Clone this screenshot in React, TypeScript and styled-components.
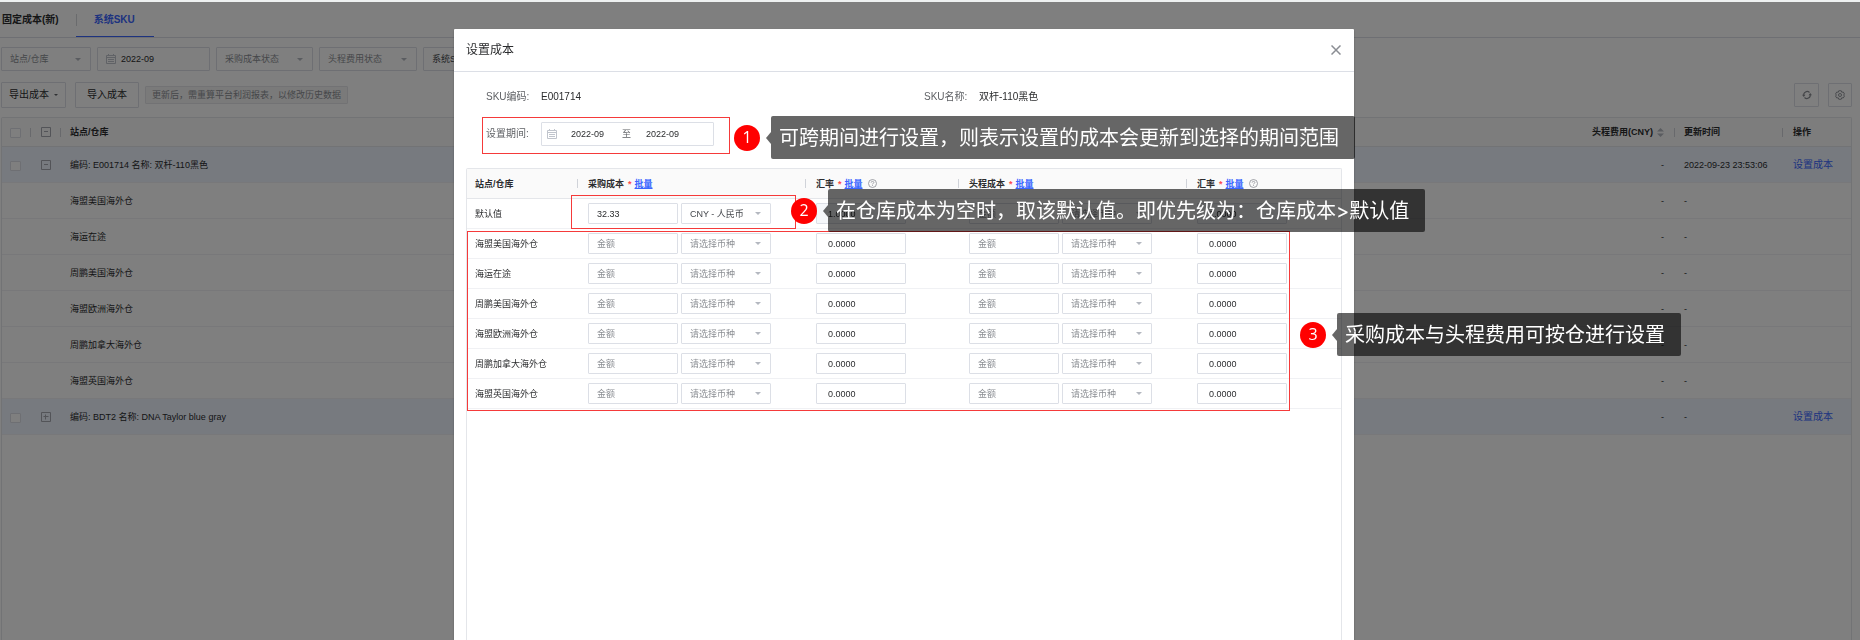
import React from "react";
import styled, { createGlobalStyle, css } from "styled-components";

const blue = "#3b66ff";
const line = "#dcdfe6";
const ink = "#2b2c2e";
const muted = "#8c8f94";

const GlobalStyle = createGlobalStyle`
  *, *::before, *::after { box-sizing: border-box; }
  body {
    margin: 0;
    overflow: hidden;
    background: #fff;
    color: ${ink};
    font: 9px/14px "Liberation Sans", "Noto Sans CJK SC", sans-serif;
  }
  button, input, select { font: inherit; color: inherit; margin: 0; }
  a { color: ${blue}; text-decoration: none; }
`;

/* ---------- Page behind the dialog ---------- */

const Page = styled.main`
  display: flex;
  flex-direction: column;
  min-height: 100vh;
  border-top: 2px solid #eef1f1;
`;

const Tabs = styled.nav`
  display: flex;
  height: 36px;
  border-bottom: 1px solid ${line};
  font-size: 10px;
  font-weight: 700;
`;

const Tab = styled.a<{ $active?: boolean }>`
  position: relative;
  display: flex;
  align-items: center;
  padding: 2px ${(p) => (p.$active ? 19 : 17)}px 0 ${(p) => (p.$active ? 18 : 2)}px;
  color: ${(p) => (p.$active ? blue : ink)};
  border-bottom: 1px solid ${(p) => (p.$active ? blue : "transparent")};
  ${(p) =>
    p.$active &&
    css`
      &::before {
        content: "";
        position: absolute;
        left: 0;
        top: 12px;
        height: 12px;
        border-left: 1px solid #d4d6da;
      }
    `}
`;

const Toolbar = styled.div<{ $top: number; $gap: number }>`
  display: flex;
  align-items: center;
  gap: ${(p) => p.$gap}px;
  padding: ${(p) => p.$top}px 8px 0 1px;
`;

const Field = styled.label<{ $w: number; $h?: number; $disabled?: boolean }>`
  display: flex;
  align-items: center;
  gap: 5px;
  flex: none;
  width: ${(p) => p.$w}px;
  height: ${(p) => p.$h ?? 24}px;
  padding: 0 9px 0 8px;
  border: 1px solid ${line};
  border-radius: 1px;
  background: ${(p) => (p.$disabled ? "#f5f7fa" : "#fff")};
`;

const Select = styled.select<{ $placeholder?: boolean }>`
  flex: 1;
  min-width: 0;
  height: 100%;
  padding: 0;
  border: 0;
  outline: 0;
  appearance: none;
  background: transparent;
  color: ${(p) => (p.$placeholder ? muted : "#44474c")};
`;

const TextInput = styled.input<{ $w?: number }>`
  ${(p) => (p.$w ? `width: ${p.$w}px;` : "flex: 1; min-width: 0;")}
  height: 100%;
  padding: 0;
  border: 0;
  outline: 0;
  background: transparent;
  &::placeholder { color: ${muted}; opacity: 1; }
`;

const RangeStart = styled(TextInput)`
  margin-left: 14px;
`;

const Button = styled.button<{ $w: number }>`
  display: flex;
  align-items: center;
  justify-content: center;
  gap: 5px;
  width: ${(p) => p.$w}px;
  height: 26px;
  padding: 0;
  border: 1px solid ${line};
  border-radius: 1px;
  background: #fff;
  font-size: 10px;
`;

const Hint = styled.span`
  height: 18px;
  margin-left: -3px;
  padding: 1px 6px;
  border: 1px solid #e4e5e8;
  border-radius: 1px;
  background: #f4f4f5;
  color: ${muted};
`;

const IconButtons = styled.div`
  display: flex;
  gap: 9px;
  margin-left: auto;
`;

const IconButton = styled(Button)`
  height: 24px;
  color: #8a8d93;
`;

const GridFrame = styled.section<{ $m: string }>`
  flex: 1;
  margin: ${(p) => p.$m};
  border: 1px solid #e4e6ea;
  border-bottom: 0;
  border-radius: 2px 2px 0 0;
`;

const Grid = styled.table`
  width: 100%;
  table-layout: fixed;
  border-collapse: separate;
  border-spacing: 0;
`;

const Th = styled.th<{ $h: number; $sep?: boolean; $right?: boolean; $pad?: number }>`
  height: ${(p) => p.$h}px;
  padding: 0 10px 0 ${(p) => p.$pad ?? 10}px;
  border-bottom: 1px solid #e4e6ea;
  background: linear-gradient(#d0d3d9, #d0d3d9) 0 50% / ${(p) => (p.$sep ? 1 : 0)}px 9px no-repeat #fafafa;
  text-align: ${(p) => (p.$right ? "right" : "left")};
  font-weight: 700;
  white-space: nowrap;
`;

const SkuRow = styled.tr<{ $group?: boolean }>`
  background: ${(p) => (p.$group ? "#eef4ff" : "#fff")};
`;

const Td = styled.td<{ $h: number; $right?: boolean; $pad?: number }>`
  height: ${(p) => p.$h}px;
  padding: 0 10px 0 ${(p) => p.$pad ?? 10}px;
  border-bottom: 1px solid #f0f1f4;
  text-align: ${(p) => (p.$right ? "right" : "left")};
  white-space: nowrap;
`;

const Check = styled.input`
  display: block;
  width: 11px;
  height: 10px;
  margin: 2px 0 0;
  appearance: none;
  border: 1px solid ${line};
  border-radius: 1px;
  background: #fff;
`;

const Toggle = styled.button`
  display: block;
  width: 10px;
  height: 10px;
  padding: 0;
  border: 0;
  background: none;
  color: #a6a9b0;
  svg { display: block; }
`;

const RowLink = styled.a`
  font-size: 10px;
`;

const SortIcon = styled.svg`
  margin-left: 4px;
  vertical-align: middle;
`;

/* ---------- Dialog ---------- */

const Mask = styled.div`
  position: fixed;
  inset: 2px 0 0;
  display: flex;
  justify-content: center;
  padding: 27px 52px 0 0;
  background: rgba(0, 0, 0, 0.5);
`;

const Dialog = styled.section`
  position: relative;
  display: flex;
  flex-direction: column;
  width: 900px;
  background: #fff;
  border-radius: 1px 1px 0 0;
  box-shadow: 0 1px 2px rgba(0, 0, 0, 0.3);
`;

const DialogHeader = styled.header`
  display: flex;
  align-items: center;
  justify-content: space-between;
  height: 43px;
  padding: 0 13px 0 12px;
  border-bottom: 1px solid ${line};
`;

const Title = styled.h2`
  margin: 0;
  font-size: 12px;
  font-weight: 400;
`;

const Close = styled.button`
  padding: 0;
  border: 0;
  background: none;
  color: #8a8d93;
  svg { display: block; }
`;

const Info = styled.div`
  display: grid;
  grid-template-columns: 438px 1fr;
  row-gap: 18px;
  padding: 18px 32px 0;
  font-size: 10px;
`;

const InfoItem = styled.div`
  display: flex;
  align-items: center;
`;

const InfoLabel = styled.span`
  width: 55px;
  color: #606266;
`;

const RangeBox = styled.div`
  display: flex;
  align-items: center;
  width: 173px;
  height: 24px;
  padding-left: 5px;
  border: 1px solid ${line};
  border-radius: 1px;
  font-size: 9px;
`;

const RangeTo = styled.span`
  margin: 0 15px 0 17px;
  color: #606266;
`;

const Pair = styled.div`
  display: flex;
  gap: 3px;
`;

const Required = styled.span`
  margin: 0 3px 0 4px;
  color: #ff4d4f;
`;

const Batch = styled.a`
  text-decoration: underline;
`;

const HelpSlot = styled.span`
  display: inline-block;
  margin-left: 5px;
  vertical-align: -1px;
  line-height: 0;
`;

/* ---------- Guide notes over the dialog ---------- */

const RedFrame = styled.div<{ $x: number; $y: number; $w: number; $h: number }>`
  position: absolute;
  left: ${(p) => p.$x}px;
  top: ${(p) => p.$y}px;
  width: ${(p) => p.$w}px;
  height: ${(p) => p.$h}px;
  border: 1px solid #f53a3a;
  pointer-events: none;
`;

const Note = styled.div<{ $x: number; $y: number }>`
  position: absolute;
  left: ${(p) => p.$x}px;
  top: ${(p) => p.$y}px;
  display: flex;
  align-items: center;
  gap: 11px;
  color: #fff;
  white-space: nowrap;
`;

const Marker = styled.span`
  width: 26px;
  height: 26px;
  border-radius: 50%;
  background: #f00;
  text-align: center;
  font-family: "Open Sans", sans-serif;
  font-size: 16px;
  line-height: 24px;
`;

const Bubble = styled.p`
  position: relative;
  margin: 0;
  height: 43px;
  padding: 0 16px 0 8px;
  border-radius: 2px;
  background: rgba(0, 0, 0, 0.6);
  font-family: Inter, "Noto Sans CJK SC", sans-serif;
  font-size: 20px;
  line-height: 45px;
  &::before {
    content: "";
    position: absolute;
    right: 100%;
    top: 16px;
    border: 6px solid transparent;
    border-left: 0;
    border-right: 5px solid rgba(0, 0, 0, 0.6);
  }
`;

/* ---------- Icons ---------- */

const Caret = ({ size = 6, color = "#b4b8c0" }: { size?: number; color?: string }) => (
  <svg width={size} height={size / 2} viewBox="0 0 6 3" fill={color} aria-hidden="true">
    <path d="M0 0h6L3 3z" />
  </svg>
);

const CalendarIcon = () => (
  <svg width="10" height="10" viewBox="0 0 10 10" fill="none" stroke="#c0c4cc" aria-hidden="true">
    <path d="M.5 1.5h9v8h-9zM.5 3.5h9M2.5 0v2M7.5 0v2" />
    <path d="M2 5.5h6M2 7.5h6" />
  </svg>
);

const ToggleIcon = ({ open }: { open: boolean }) => (
  <svg width="10" height="10" viewBox="0 0 10 10" fill="none" stroke="currentColor" aria-hidden="true">
    <path d="M.5.5h9v9h-9z" />
    <path d={open ? "M3 4.5h4" : "M2.5 4.5h5M4.5 2.5v5"} />
  </svg>
);

const HelpIcon = () => (
  <svg width="9" height="9" viewBox="0 0 18 18" fill="none" stroke="#8a8d93" strokeWidth="1.6" aria-hidden="true">
    <circle cx="9" cy="9" r="8" />
    <path d="M6.3 7.2C6.3 5.6 7.5 4.7 9 4.7s2.7 1 2.7 2.4C11.7 8.8 9 8.8 9 10.8M9 12.4v1.6" />
  </svg>
);

const RefreshIcon = () => (
  <svg width="10" height="10" viewBox="0 0 20 20" fill="none" stroke="currentColor" strokeWidth="2.2" aria-hidden="true">
    <path d="M3.5 11a6.8 6.8 0 0 1 11.5-6M16.5 9a6.8 6.8 0 0 1-11.5 6" />
    <path d="M0 9.5h7L3.5 14zM13 10.5h7L16.5 6z" fill="currentColor" stroke="none" />
  </svg>
);

const GearIcon = () => (
  <svg width="10" height="10" viewBox="0 0 20 20" fill="none" stroke="currentColor" strokeWidth="1.8" aria-hidden="true">
    <path d="M7.5 1.5h5l1 3 3-.5 2.5 4-2 2 2 2-2.5 4-3-.5-1 3h-5l-1-3-3 .5L1 12l2-2-2-2 2.500-4 3 .5z" />
    <circle cx="10" cy="10" r="3" />
  </svg>
);

const CloseIcon = () => (
  <svg width="10" height="10" viewBox="0 0 10 10" fill="none" stroke="currentColor" strokeWidth="1.5" aria-hidden="true">
    <path d="M.5.5l9 9M9.5.5l-9 9" />
  </svg>
);

/* ---------- Pieces ---------- */

type DropProps = { label: string; text: string; w: number; h?: number; placeholder?: boolean };

const Drop = ({ label, text, w, h, placeholder = true }: DropProps) => (
  <Field $w={w} $h={h}>
    <Select aria-label={label} $placeholder={placeholder} defaultValue={text}>
      <option>{text}</option>
    </Select>
    <Caret />
  </Field>
);

const Cost = ({ label, amount, currency }: { label: string; amount?: string; currency?: string }) => (
  <Pair>
    <Field $w={90} $h={21}>
      <TextInput aria-label={label} placeholder="金额" defaultValue={amount} />
    </Field>
    <Drop label={`${label}币种`} text={currency ?? "请选择币种"} placeholder={!currency} w={90} h={21} />
  </Pair>
);

const RateField = styled(Field)`
  padding-left: 11px;
`;

const Rate = ({ label, locked }: { label: string; locked?: boolean }) => (
  <RateField $w={90} $h={21} $disabled={locked}>
    <TextInput aria-label={label} defaultValue={locked ? "1.0000" : "0.0000"} readOnly={locked} />
  </RateField>
);

const CostHead = ({ text, help }: { text: string; help?: boolean }) => (
  <Th $h={30} $sep $pad={11} scope="col">
    {text}
    <Required>*</Required>
    <Batch href="#batch">批量</Batch>
    {help && (
      <HelpSlot>
        <HelpIcon />
      </HelpSlot>
    )}
  </Th>
);

/* ---------- Data ---------- */

const warehouses = ["海盟美国海外仓", "海运在途", "周鹏美国海外仓", "海盟欧洲海外仓", "周鹏加拿大海外仓", "海盟英国海外仓"];

type Sku = { name: string; group?: boolean; open?: boolean; time?: string };

const skuRows: Sku[] = [
  { name: "编码: E001714 名称: 双杆-110黑色", group: true, open: true, time: "2022-09-23 23:53:06" },
  ...warehouses.map((name) => ({ name })),
  { name: "编码: BDT2 名称: DNA Taylor blue gray", group: true, open: false },
];

export default function App() {
  return (
    <>
      <GlobalStyle />
      <Page>
        <Tabs>
          <Tab href="#fixed">固定成本(新)</Tab>
          <Tab href="#sku" $active>系统SKU</Tab>
        </Tabs>
        <Toolbar $top={9} $gap={6}>
          <Drop label="站点/仓库" text="站点/仓库" w={90} />
          <Field $w={113}>
            <CalendarIcon />
            <TextInput aria-label="月份" defaultValue="2022-09" />
          </Field>
          <Drop label="采购成本状态" text="采购成本状态" w={97} />
          <Drop label="头程费用状态" text="头程费用状态" w={98} />
          <Drop label="搜索类型" text="系统SKU" w={90} placeholder={false} />
        </Toolbar>
        <Toolbar $top={11} $gap={9}>
          <Button $w={65}>
            导出成本
            <Caret size={4} color="#606266" />
          </Button>
          <Button $w={64}>导入成本</Button>
          <Hint>更新后，需重算平台利润报表，以修改历史数据</Hint>
          <IconButtons>
            <IconButton $w={25} aria-label="刷新"><RefreshIcon /></IconButton>
            <IconButton $w={24} aria-label="设置"><GearIcon /></IconButton>
          </IconButtons>
        </Toolbar>
        <GridFrame $m="9px 8px 0 1px">
          <Grid>
            <colgroup>
              <col width="28" />
              <col width="30" />
              <col />
              <col width="120" />
              <col width="108" />
              <col width="69" />
            </colgroup>
            <thead>
              <tr>
                <Th $h={29} $pad={8}><Check type="checkbox" aria-label="全选" /></Th>
                <Th $h={29} $sep $pad={11}><Toggle aria-label="全部收起"><ToggleIcon open /></Toggle></Th>
                <Th $h={29} $sep scope="col">站点/仓库</Th>
                <Th $h={29} $right scope="col">
                  头程费用(CNY)
                  <SortIcon width="7" height="9" viewBox="0 0 7 9" fill="#b4b8c0" aria-hidden="true">
                    <path d="M0 3.5L3.5 0 7 3.5zM0 5.5h7L3.5 9z" />
                  </SortIcon>
                </Th>
                <Th $h={29} $sep scope="col">更新时间</Th>
                <Th $h={29} $sep $pad={11} scope="col">操作</Th>
              </tr>
            </thead>
            <tbody>
              {skuRows.map((row) => (
                <SkuRow key={row.name} $group={row.group}>
                  <Td $h={36} $pad={8}>{row.group && <Check type="checkbox" aria-label={row.name} />}</Td>
                  <Td $h={36} $pad={11}>
                    {row.group && (
                      <Toggle aria-label="展开或收起"><ToggleIcon open={!!row.open} /></Toggle>
                    )}
                  </Td>
                  <Td $h={36}>{row.name}</Td>
                  <Td $h={36} $right>-</Td>
                  <Td $h={36}>{row.time ?? "-"}</Td>
                  <Td $h={36} $pad={11}>{row.group && <RowLink href="#cost">设置成本</RowLink>}</Td>
                </SkuRow>
              ))}
            </tbody>
          </Grid>
        </GridFrame>
      </Page>

      <Mask>
        <Dialog role="dialog" aria-labelledby="dialog-title">
          <DialogHeader>
            <Title id="dialog-title">设置成本</Title>
            <Close aria-label="关闭"><CloseIcon /></Close>
          </DialogHeader>
          <Info>
            <InfoItem><InfoLabel>SKU编码:</InfoLabel>E001714</InfoItem>
            <InfoItem><InfoLabel>SKU名称:</InfoLabel>双杆-110黑色</InfoItem>
            <InfoItem>
              <InfoLabel>设置期间:</InfoLabel>
              <RangeBox>
                <CalendarIcon />
                <RangeStart aria-label="开始月份" defaultValue="2022-09" $w={34} />
                <RangeTo>至</RangeTo>
                <TextInput aria-label="结束月份" defaultValue="2022-09" />
              </RangeBox>
            </InfoItem>
          </Info>
          <GridFrame $m="22px 12px 0">
            <Grid>
              <colgroup>
                <col width="110" />
                <col width="228" />
                <col width="153" />
                <col width="228" />
                <col />
              </colgroup>
              <thead>
                <tr>
                  <Th $h={30} $pad={8} scope="col">站点/仓库</Th>
                  <CostHead text="采购成本" />
                  <CostHead text="汇率" help />
                  <CostHead text="头程成本" />
                  <CostHead text="汇率" help />
                </tr>
              </thead>
              <tbody>
                {["默认值", ...warehouses].map((name, i) => (
                  <tr key={name}>
                    <Td $h={30} $pad={8}>{name}</Td>
                    <Td $h={30} $pad={11}>
                      <Cost
                        label={`${name}采购成本`}
                        amount={i === 0 ? "32.33" : undefined}
                        currency={i === 0 ? "CNY - 人民币" : undefined}
                      />
                    </Td>
                    <Td $h={30} $pad={11}><Rate label={`${name}采购汇率`} locked={i === 0} /></Td>
                    <Td $h={30} $pad={11}><Cost label={`${name}头程成本`} /></Td>
                    <Td $h={30} $pad={11}><Rate label={`${name}头程汇率`} locked={i === 0} /></Td>
                  </tr>
                ))}
              </tbody>
            </Grid>
          </GridFrame>

          <RedFrame $x={28} $y={88} $w={248} $h={37} />
          <RedFrame $x={117} $y={166} $w={225} $h={34} />
          <RedFrame $x={13} $y={202} $w={823} $h={180} />
          <Note $x={280} $y={87}>
            <Marker>1</Marker>
            <Bubble>可跨期间进行设置，则表示设置的成本会更新到选择的期间范围</Bubble>
          </Note>
          <Note $x={337} $y={160}>
            <Marker>2</Marker>
            <Bubble>在仓库成本为空时，取该默认值。即优先级为：仓库成本&gt;默认值</Bubble>
          </Note>
          <Note $x={846} $y={284}>
            <Marker>3</Marker>
            <Bubble>采购成本与头程费用可按仓进行设置</Bubble>
          </Note>
        </Dialog>
      </Mask>
    </>
  );
}
